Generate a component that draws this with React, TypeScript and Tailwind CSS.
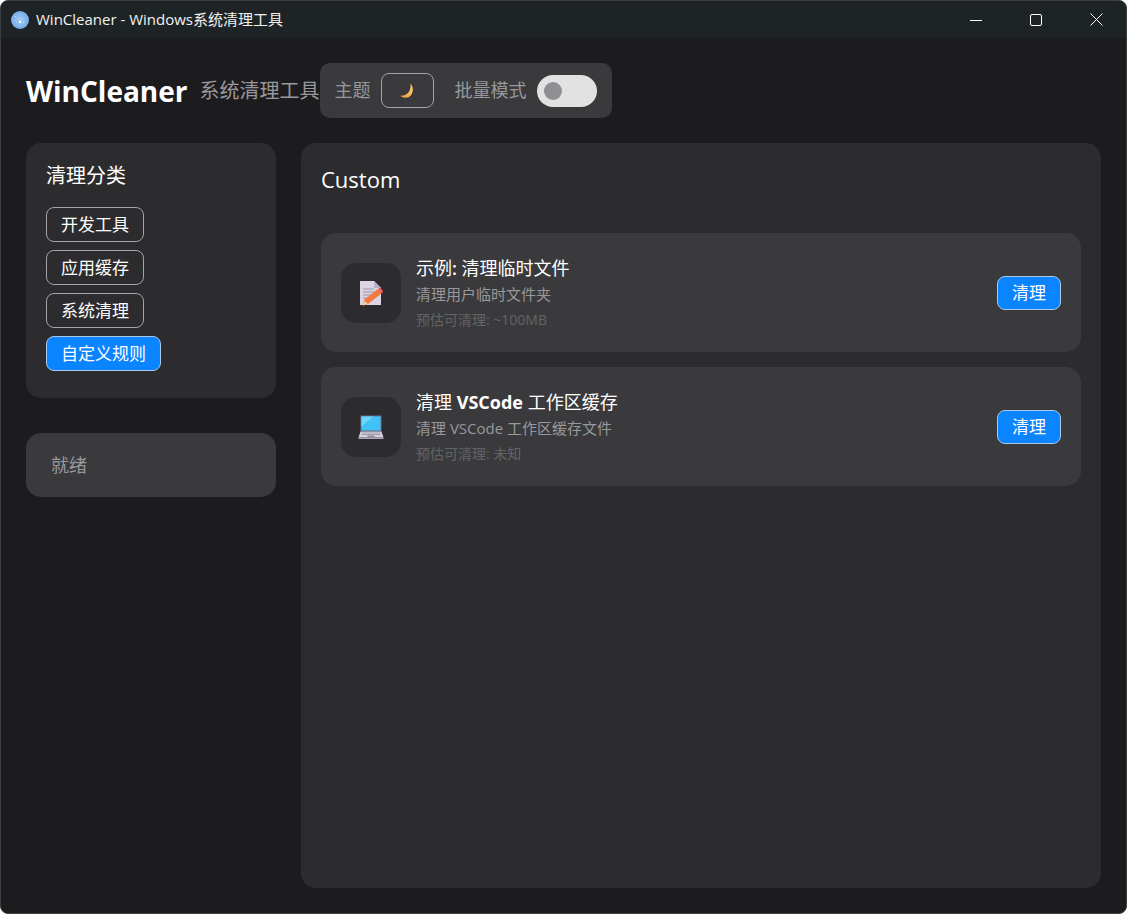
const FONT = "font-['Open_Sans','Noto_Sans_CJK_SC',sans-serif]";

function AppIcon() {
  return (
    <svg width="18" height="18" viewBox="0 0 18 18" className="shrink-0">
      <defs>
        <radialGradient id="disc" cx="50%" cy="50%" r="55%">
          <stop offset="0%" stopColor="#a9cdf3" />
          <stop offset="100%" stopColor="#6fa8ea" />
        </radialGradient>
      </defs>
      <circle cx="9" cy="9" r="9" fill="url(#disc)" />
      <rect x="8" y="10" width="2" height="2" fill="#ffffff" />
      <rect x="12" y="11" width="1" height="1" fill="#f5e6a8" />
      <rect x="4" y="5" width="1" height="1" fill="#d8e8fa" />
    </svg>
  );
}

function WindowButtons() {
  return (
    <div className="flex h-full items-center text-white">
      <div className="flex w-[60px] justify-center">
        <svg width="12" height="12" viewBox="0 0 12 12">
          <path d="M0 6.5h12" stroke="currentColor" strokeWidth="1" />
        </svg>
      </div>
      <div className="flex w-[60px] justify-center">
        <svg width="12" height="12" viewBox="0 0 12 12">
          <rect x="0.5" y="0.5" width="11" height="11" rx="1.5" fill="none" stroke="currentColor" strokeWidth="1" />
        </svg>
      </div>
      <div className="flex w-[60px] justify-center">
        <svg width="13" height="13" viewBox="0 0 13 13">
          <path d="M0.5 0.5l12 12M12.5 0.5l-12 12" stroke="currentColor" strokeWidth="1" />
        </svg>
      </div>
    </div>
  );
}

function Moon() {
  return (
    <svg width="18" height="18" viewBox="0 0 18 18">
      <defs>
        <linearGradient id="moon" x1="1" y1="0" x2="0" y2="1">
          <stop offset="0%" stopColor="#fcd772" />
          <stop offset="100%" stopColor="#f0983c" />
        </linearGradient>
      </defs>
      <path d="M12.5 1.5C15.5 5 15.5 10 13 13.2 10.6 16.3 5.6 16.6 2 13.8 5.2 14 8.6 13 10.6 10.3 12.4 7.8 12.9 4.5 12.5 1.5z" fill="url(#moon)" />
    </svg>
  );
}

function MemoIcon() {
  return (
    <svg width="24" height="26" viewBox="0 0 24 26">
      <path d="M1 1h14l7 7v17H1z" fill="#dcd3e4" />
      <path d="M15 1l7 7h-7z" fill="#b9afc6" />
      <path d="M4 9h11M4 12h13M4 15h9M4 18h6" stroke="#9c93a6" strokeWidth="1.2" />
      <path d="M5 20L19 9l4 4L9 24l-5 1.5z" fill="#f2793a" />
      <path d="M19 9l2-1.5 3.5 3.5L23 13z" fill="#f0515a" />
      <path d="M4 25.5l1-5 4 3.5z" fill="#f3cfa0" />
    </svg>
  );
}

function LaptopIcon() {
  return (
    <svg width="26" height="26" viewBox="0 0 26 26">
      <rect x="2.5" y="1.5" width="21" height="16" rx="0.5" fill="#6a6f96" />
      <rect x="3.5" y="2.5" width="19" height="14" fill="#3fc2f5" />
      <path d="M3.5 2.5h12l-12 10z" fill="#6dd6fa" />
      <path d="M2.5 17.5h21l2 6h-25z" fill="#d6cfde" />
      <path d="M4 19h18M3.5 20.5h19" stroke="#a49dae" strokeWidth="1" />
      <rect x="9.5" y="21.5" width="7" height="1.5" fill="#8f8899" />
      <rect x="0.5" y="23.5" width="25" height="1.5" fill="#aaa3b5" />
    </svg>
  );
}

const categories = [
  { name: "开发工具", active: false },
  { name: "应用缓存", active: false },
  { name: "系统清理", active: false },
  { name: "自定义规则", active: true },
];

function RuleCard({
  icon,
  title,
  desc,
  size,
  bottomGap,
}: {
  icon: React.ReactNode;
  title: React.ReactNode;
  desc: string;
  size: string;
  bottomGap: string;
}) {
  return (
    <div className={`flex h-[119px] items-center rounded-[15px] bg-[#3a3a3c] px-5 ${bottomGap}`}>
      <div className="flex h-[60px] w-[60px] shrink-0 items-center justify-center rounded-[15px] bg-[#2c2c2e]">
        {icon}
      </div>
      <div className="ml-[15px] flex-1">
        <div className="text-[18px] leading-[24px] text-white">{title}</div>
        <div className="mt-[4px] text-[15px] leading-[20px] text-[#98989d]">{desc}</div>
        <div className="mt-[6px] text-[14px] leading-[20px] text-[#636366]">预估可清理: {size}</div>
      </div>
      <button className="h-[34px] rounded-[8px] border border-[#a9c9ef] bg-[#0a84ff] px-[14px] text-[17px] leading-[22px] text-white">
        清理
      </button>
    </div>
  );
}

export default function App() {
  return (
    <div className={`h-[914px] w-[1127px] overflow-hidden rounded-[8px] border border-[#3b3d3e] bg-[#1c1c1e] ${FONT}`}>
      <div className="flex h-[37px] items-center justify-between bg-[#1e2425] pl-[10px]">
        <div className="flex items-center gap-[7px] text-[15px] text-[#f2f2f2]">
          <AppIcon />
          <span>WinCleaner - Windows系统清理工具</span>
        </div>
        <WindowButtons />
      </div>

      <div className="px-[25px] pt-[25px]">
        <div className="flex h-[55px] items-center">
          <span className="text-[28px] font-bold leading-none text-white">WinCleaner</span>
          <span className="ml-[12px] text-[20px] text-[#98989d]">系统清理工具</span>
          <div className="flex h-[55px] items-center rounded-[10px] bg-[#3a3a3c] px-[15px]">
            <span className="text-[18px] text-[#98989d]">主题</span>
            <div className="ml-[10px] flex h-[35px] w-[53px] items-center justify-center rounded-[8px] border border-[#a4a4a6]">
              <Moon />
            </div>
            <span className="ml-[21px] text-[18px] text-[#98989d]">批量模式</span>
            <div className="ml-[10px] flex h-[32px] w-[60px] items-center rounded-full bg-[#e2e2e2] pl-[7px]">
              <div className="h-[18px] w-[18px] rounded-full bg-[#8e8e93]" />
            </div>
          </div>
        </div>

        <div className="mt-[25px] flex gap-[25px]">
          <div className="w-[250px] shrink-0">
            <div className="h-[255px] rounded-[15px] bg-[#2c2c2e] px-5 pt-[19px]">
              <div className="text-[20px] leading-[28px] text-white">清理分类</div>
              <div className="mt-[17px] flex flex-col items-start gap-[8px]">
                {categories.map((c) => (
                  <button
                    key={c.name}
                    className={
                      c.active
                        ? "h-[35px] rounded-[8px] border border-[#a9c9ef] bg-[#0a84ff] px-[14px] text-[17px] text-white"
                        : "h-[35px] rounded-[8px] border border-[#a4a4a6] px-[14px] text-[17px] text-white"
                    }
                  >
                    {c.name}
                  </button>
                ))}
              </div>
            </div>
            <div className="mt-[35px] flex h-[64px] items-center rounded-[15px] bg-[#3a3a3c] px-[25px] text-[18px] text-[#98989d]">
              就绪
            </div>
          </div>

          <div className="h-[745px] w-[800px] rounded-[15px] bg-[#2c2c2e] p-5">
            <div className="text-[22px] leading-[32px] text-white">Custom</div>
            <div className="mt-[38px]">
              <RuleCard
                icon={<MemoIcon />}
                title={<span>示例<span className="font-semibold">:</span> 清理临时文件</span>}
                desc="清理用户临时文件夹"
                size="~100MB"
                bottomGap="mb-[15px]"
              />
              <RuleCard
                icon={<LaptopIcon />}
                title={<span>清理 <span className="font-bold">VSCode</span> 工作区缓存</span>}
                desc="清理 VSCode 工作区缓存文件"
                size="未知"
                bottomGap=""
              />
            </div>
          </div>
        </div>
      </div>
    </div>
  );
}
